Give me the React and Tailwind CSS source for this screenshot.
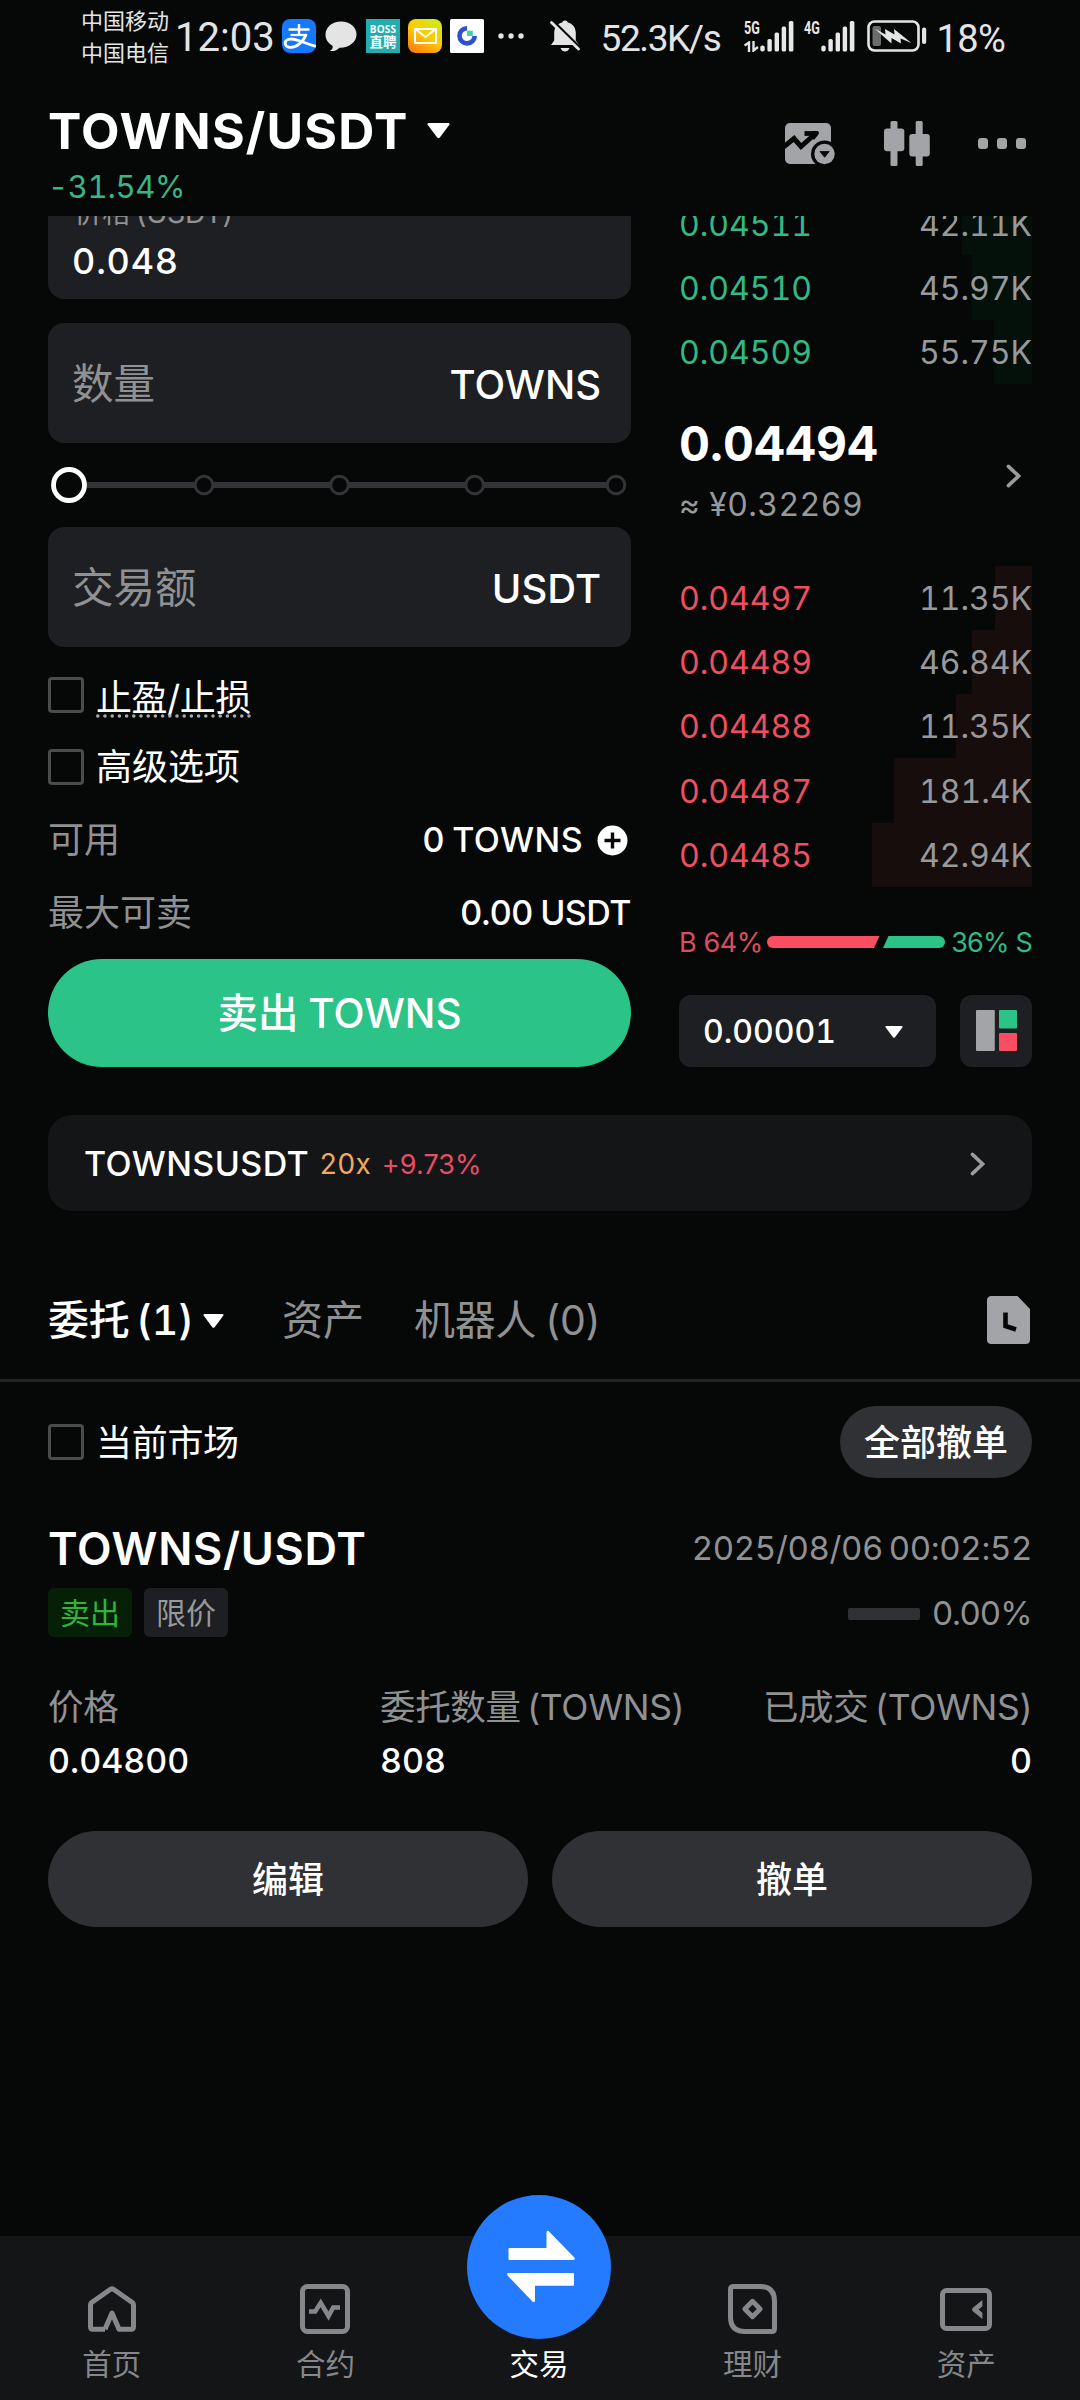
const FONT = "font-[Inter,'Noto_Sans_CJK_SC',sans-serif]";

function Caret({ className }) {
  return (
    <svg className={className} viewBox="0 0 23 15.5" fill="#fff">
      <path d="M1.8 0H21.2Q23.4 0.3 22.2 2L12.8 14.6Q11.5 16 10.2 14.6L0.8 2Q-0.4 0.3 1.8 0Z" />
    </svg>
  );
}

function Chevron() {
  return (
    <svg className="h-6 w-4" viewBox="0 0 16 24" fill="none" stroke="#9b9c9e" strokeWidth="3.6" strokeLinecap="round">
      <path d="M2.4 2.4L12.6 12L2.4 21.6" />
    </svg>
  );
}

function Checkbox() {
  return <span className="block h-9 w-9 shrink-0 rounded-[4px] border-[3px] border-[#4b4c4e]" />;
}

/* ---------- Status bar ---------- */

function SignalBars() {
  return (
    <svg className="h-[31px] w-[34px]" viewBox="0 0 34 31" fill="#e8e8e8">
      <rect x="0.3" y="24.5" width="4.4" height="6" rx="2" />
      <rect x="7.4" y="18" width="4.4" height="12.5" rx="1.6" />
      <rect x="14.6" y="11.5" width="4.4" height="19" rx="1.6" />
      <rect x="21.7" y="5.5" width="4.4" height="25" rx="1.6" />
      <rect x="28.8" y="0" width="4.6" height="30.5" rx="1.6" />
    </svg>
  );
}

function NetLabel({ children }) {
  return (
    <span className="block h-[14px] w-[17px] origin-left scale-x-[0.66] font-[Roboto,sans-serif] text-[19px] leading-[14px] font-bold whitespace-nowrap text-[#e8e8e8]">
      {children}
    </span>
  );
}

function StatusBar() {
  return (
    <div className="flex h-[72px] items-center pl-[81px] font-[Roboto,'Noto_Sans_CJK_SC',sans-serif] text-[#e4e4e4]">
      <div className="w-[90px] shrink-0 pt-[3px] text-[22px] leading-8 whitespace-nowrap">
        <div>中国移动</div>
        <div>中国电信</div>
      </div>
      <span className="ml-[4px] w-[100px] shrink-0 pt-1 text-[40px] leading-none whitespace-nowrap">12:03</span>
      <svg className="ml-[7px] h-[34px] w-[34px] shrink-0" viewBox="0 0 34 34">
        <rect width="34" height="34" rx="8" fill="#1677ff" />
        <g fill="none" stroke="#fff" strokeLinecap="butt">
          <path d="M6.500 10.500H27.500M17 5V16" strokeWidth="2.400" />
          <path d="M8.500 16H25" strokeWidth="2.200" />
          <path d="M24.200 15C22 22 15 28.500 8.500 28.300C2.500 28 1.500 22.500 6 20.500C12 18 20 23.500 34 27.500" strokeWidth="2.800" />
        </g>
      </svg>
      <svg className="ml-[9px] h-[31px] w-8 shrink-0" viewBox="0 0 32 31" fill="#e4e4e4">
        <path d="M16 0.500C7 0.500 0.500 6.300 0.500 13.500C0.500 18.500 3 22 7.500 24.800C8.300 27.500 6.500 29 4.800 30C9 30.500 12.500 29 14.500 26.700C24 27 31.500 21 31.500 13.500C31.500 6.300 25 0.500 16 0.500Z" />
      </svg>
      <div className="ml-[9px] flex h-[34px] w-[34px] shrink-0 flex-col items-center justify-center bg-[#23adb0] font-['Open_Sans','Noto_Sans_CJK_SC',sans-serif] font-bold text-white">
        <span className="text-[10px] leading-[12px] tracking-[0.2px]">BOSS</span>
        <span className="text-[13.500px] leading-[15px]">直聘</span>
      </div>
      <div className="ml-2 flex h-[34px] w-[34px] shrink-0 items-center justify-center rounded-lg bg-[linear-gradient(30deg,#ff7a0c_5%,#ffc800_50%,#c8f01a_98%)]">
        <svg className="h-4 w-[23px]" viewBox="0 0 23 16" fill="none" stroke="#fff" strokeWidth="2">
          <rect x="1" y="1" width="21" height="14" />
          <path d="M2 1.500L11.500 9L21 1.500" />
        </svg>
      </div>
      <svg className="ml-2 h-[34px] w-[34px] shrink-0" viewBox="0 0 34 34">
        <rect width="34" height="34" rx="1.500" fill="#fff" />
        <path d="M17 9.200A7.600 7.600 0 1 0 24.700 17" fill="none" stroke="#2d50cf" strokeWidth="4.600" />
        <rect x="17" y="11.700" width="5.800" height="5.300" fill="#35d3b4" />
      </svg>
      <svg className="ml-[13.500px] h-[6px] w-[26px] shrink-0" viewBox="0 0 26 6" fill="#e4e4e4">
        <circle cx="3" cy="3" r="2.700" />
        <circle cx="13" cy="3" r="2.700" />
        <circle cx="23" cy="3" r="2.700" />
      </svg>
      <svg className="ml-[26px] h-8 w-[31px] shrink-0" viewBox="0 0 31 32">
        <path d="M15 0.500C16.500 0.500 17.500 1.300 17.800 2.500C23 3.800 25.800 8 25.800 13V20.500L29 25H1L4.200 20.500V13C4.200 8 7 3.800 12.200 2.500C12.500 1.300 13.500 0.500 15 0.500Z" fill="#e4e4e4" />
        <path d="M10.500 28H19.500Q18 31.500 15 31.500T10.500 28Z" fill="#e4e4e4" />
        <path d="M0 -1.500L32 30" stroke="#060807" strokeWidth="3.400" />
        <path d="M1.500 2.500L28.500 29" stroke="#e4e4e4" strokeWidth="2.800" strokeLinecap="round" />
      </svg>
      <span className="ml-[20px] w-[120px] shrink-0 pt-[5px] text-[37px] leading-none tracking-[-1.400px] whitespace-nowrap">52.3K/s</span>
      <div className="ml-[23px] flex w-[16px] shrink-0 flex-col gap-[6px]">
        <NetLabel>5G</NetLabel>
        <svg className="h-[11px] w-[15px]" viewBox="0 0 15 11" fill="none" stroke="#e4e4e4" strokeWidth="2.400">
          <path d="M0.500 4.500L5 1.500V11M9.500 0V9.500L14 6" />
        </svg>
      </div>
      <SignalBars />
      <div className="ml-[10px] flex w-[17px] shrink-0 flex-col gap-[6px]">
        <NetLabel>4G</NetLabel>
        <span className="h-[11px]" />
      </div>
      <SignalBars />
      <svg className="ml-[12px] h-8 w-[60px] shrink-0" viewBox="0 0 60 32">
        <rect x="1.500" y="1.500" width="50" height="29" rx="6" fill="none" stroke="#e4e4e4" strokeWidth="2.600" />
        <rect x="5.500" y="6" width="8.500" height="20" rx="2" fill="#6a6b6b" />
        <path d="M7.500 8.500L18.500 14.500L18 9L27.500 14.500L27 9L44.500 23L33.500 18.500L34 23.500L24.500 18L24.500 23.500Z" fill="#e4e4e4" />
        <rect x="55" y="7.500" width="4.200" height="16.500" rx="2" fill="#e4e4e4" />
      </svg>
      <span className="ml-[10px] shrink-0 pt-[5px] text-[38px] leading-none tracking-[-0.600px] whitespace-nowrap">18%</span>
    </div>
  );
}

/* ---------- Header ---------- */

function Header() {
  return (
    <header className="flex h-36 items-start justify-between pr-[54px] pl-12">
      <div className="pt-[29px]">
        <div className="flex items-center">
          <h1 className="text-[50px] leading-[60px] font-bold tracking-[1.200px] text-white">TOWNS/USDT</h1>
          <Caret className="ml-[19px] h-[15.500px] w-[23px]" />
        </div>
        <div className="mt-[6px] text-[31px] leading-10 tracking-[-0.300px] text-[#35b787] tabular-nums">-31.54%</div>
      </div>
      <div className="flex items-center gap-[48px] pt-[49px]">
        <svg className="h-[42px] w-[51px]" viewBox="0 0 51 42">
          <rect y="0" width="46" height="41" rx="5" fill="#a2a4a8" />
          <g fill="none" stroke="#060807" strokeWidth="5">
            <path d="M-2 24.500L9 15.500L16 23.500L29.500 11.500" />
            <path d="M19.500 10.500H31.500" strokeWidth="4.800" />
          </g>
          <path d="M27 8.100H32.500Q34.500 9 33.500 11.500L29 17L25 12Z" fill="#060807" />
          <circle cx="39.500" cy="31" r="13.500" fill="#060807" />
          <circle cx="39.500" cy="31" r="10.200" fill="#a2a4a8" />
          <path d="M35 28.500H44.200L39.600 34.300Z" fill="#060807" stroke="#060807" strokeWidth="0.800" strokeLinejoin="round" />
        </svg>
        <svg className="h-[45px] w-[46px]" viewBox="0 0 46 45" fill="#a2a4a8">
          <rect x="6.500" width="7" height="45" rx="1.500" />
          <rect y="7.500" width="20.300" height="22.800" rx="3" />
          <rect x="31.700" width="7" height="45" rx="1.500" />
          <rect x="25.300" y="13" width="20.500" height="22.500" rx="3" />
        </svg>
        <div className="flex gap-[8.500px]">
          <i className="h-[10.500px] w-[10.500px] rounded-[3px] bg-[#a2a4a8]" />
          <i className="h-[10.500px] w-[10.500px] rounded-[3px] bg-[#a2a4a8]" />
          <i className="h-[10.500px] w-[10.500px] rounded-[3px] bg-[#a2a4a8]" />
        </div>
      </div>
    </header>
  );
}

/* ---------- Order form ---------- */

function AmountField({ label, unit }) {
  return (
    <div className="flex h-[120px] items-center justify-between rounded-2xl bg-[#1e1f22] pt-[3px] pr-[30px] pl-6">
      <span className="text-[41.500px] leading-none text-[#909193]">{label}</span>
      <span className="text-[40px] leading-none font-medium text-white">{unit}</span>
    </div>
  );
}

function AmountSlider() {
  return (
    <svg className="block h-[84px] w-[583px]" viewBox="0 0 583 84" fill="#060807">
      <path d="M21 42H568" stroke="#333437" strokeWidth="6" />
      <g stroke="#333437" strokeWidth="3">
        <circle cx="156" cy="42" r="8.800" />
        <circle cx="291.500" cy="42" r="8.800" />
        <circle cx="426.700" cy="42" r="8.800" />
        <circle cx="568" cy="42" r="8.800" />
      </g>
      <circle cx="21" cy="42" r="15.500" stroke="#fff" strokeWidth="4.800" />
    </svg>
  );
}

function OrderForm() {
  return (
    <div className="w-[583px]">
      <div className="flex h-[83px] flex-col justify-end overflow-hidden">
        <div className="h-[120px] shrink-0 rounded-2xl bg-[#1e1f22] px-6 pt-[17px]">
          <div className="pl-[2px] text-[28.500px] leading-[34px] tracking-[-0.300px] [word-spacing:-2px] text-[#909193]">价格 (USDT)</div>
          <div className="mt-[9px] text-[36px] leading-[44px] font-medium tracking-[0.800px] text-white tabular-nums">0.048</div>
        </div>
      </div>
      <div className="mt-6">
        <AmountField label="数量" unit="TOWNS" />
      </div>
      <AmountSlider />
      <AmountField label="交易额" unit="USDT" />
      <div className="mt-[30px] flex h-9 items-center gap-3 text-[36px] text-white">
        <Checkbox />
        <span className="flex flex-col pt-1">
          <span className="h-9 leading-9 tracking-[-0.400px]">止盈/止损</span>
          <svg className="-mt-[2px] -mb-1 h-1 w-[155px]" viewBox="0 0 155 4">
            <path d="M1.800 2H154" stroke="#a8a9ab" strokeWidth="3.600" strokeLinecap="round" strokeDasharray="0 7.200" />
          </svg>
        </span>
      </div>
      <div className="mt-9 flex h-9 items-center gap-3 text-[36px] text-white">
        <Checkbox />
        <span className="leading-9">高级选项</span>
      </div>
      <div className="mt-[33px] flex h-[44px] items-center justify-between pr-[3px]">
        <span className="text-[36px] leading-none text-[#909193]">可用</span>
        <span className="flex items-center gap-[14px] text-[34px] leading-none font-medium tracking-[0.400px] [word-spacing:-2px] text-white">
          0 TOWNS
          <svg className="h-[31px] w-[31px]" viewBox="0 0 31 31">
            <circle cx="15.500" cy="15.500" r="15" fill="#fff" />
            <path d="M15.500 7.500V23.500M7.500 15.500H23.500" stroke="#060807" strokeWidth="3.400" />
          </svg>
        </span>
      </div>
      <div className="mt-7 flex h-[44px] items-center justify-between pt-px">
        <span className="text-[36px] leading-none text-[#909193]">最大可卖</span>
        <span className="text-[34px] leading-none font-medium tracking-[-0.500px] [word-spacing:-1px] text-white">0.00 USDT</span>
      </div>
      <button className="mt-[25px] flex h-[108px] w-full items-center justify-center rounded-full bg-[#2bc388] pt-[2px] text-[40.500px] leading-none font-medium [word-spacing:-1px] text-white">
        卖出 TOWNS
      </button>
    </div>
  );
}

/* ---------- Order book ---------- */

const upper = [
  { price: "0.04511", size: "42.11K", depth: 70 },
  { price: "0.04510", size: "45.97K", depth: 60 },
  { price: "0.04509", size: "55.75K", depth: 38 },
];
const lower = [
  { price: "0.04497", size: "11.35K", depth: 37 },
  { price: "0.04489", size: "46.84K", depth: 60 },
  { price: "0.04488", size: "11.35K", depth: 76 },
  { price: "0.04487", size: "181.4K", depth: 138 },
  { price: "0.04485", size: "42.94K", depth: 160 },
];

function BookRow({ row, priceClass, depthClass }) {
  return (
    <div className="relative flex h-[64.300px] shrink-0 items-center justify-between pt-[2.500px] text-[32px] leading-none tabular-nums">
      <span className={"absolute inset-y-0 right-0 " + depthClass} style={{ width: row.depth }} />
      <span className={"relative " + priceClass}>{row.price}</span>
      <span className="relative text-[#98999b]">{row.size}</span>
    </div>
  );
}

function OrderBook() {
  return (
    <div className="w-[353px]">
      <div className="flex h-[168px] flex-col justify-end overflow-hidden">
        {upper.map((r) => (
          <BookRow key={r.price} row={r} priceClass="text-[#32b985]" depthClass="bg-[#04100a]" />
        ))}
      </div>
      <div className="flex h-[181.500px] items-start justify-between pt-[30px] pr-[10px]">
        <div>
          <div className="text-[48px] leading-[60px] font-bold text-white tabular-nums">0.04494</div>
          <div className="mt-[11px] text-[32px] leading-10 tracking-[0.400px] text-[#98999b] tabular-nums">≈ ¥0.32269</div>
        </div>
        <div className="mt-[50px]">
          <Chevron />
        </div>
      </div>
      <div>
        {lower.map((r) => (
          <BookRow key={r.price} row={r} priceClass="text-[#ee4f62]" depthClass="bg-[#170d0d]" />
        ))}
      </div>
      <div className="mt-10 flex h-[30px] items-center justify-between text-[27px] leading-none">
        <span className="w-[88px] pt-px tracking-[-0.400px] whitespace-nowrap text-[#dd4d60]">B 64%</span>
        <svg className="h-3 w-[178px] shrink-0" viewBox="0 0 178 12">
          <path d="M6 0H112.500L107 12H6A6 6 0 0 1 6 0Z" fill="#f94e62" />
          <path d="M121.500 0H172A6 6 0 0 1 172 12H116Z" fill="#2bc388" />
        </svg>
        <span className="flex w-[87px] justify-end pt-px tracking-[-0.800px] whitespace-nowrap text-[#32b985]">36% S</span>
      </div>
      <div className="mt-[38px] flex gap-6">
        <div className="flex h-[72px] w-[257px] items-center justify-between rounded-xl bg-[#1e1f22] pt-[2px] pr-[33px] pl-6">
          <span className="text-[32px] leading-none font-medium text-white tabular-nums">0.00001</span>
          <Caret className="h-[12px] w-[18px]" />
        </div>
        <div className="flex h-[72px] w-[72px] items-center justify-center rounded-xl bg-[#1e1f22]">
          <svg className="h-[41px] w-[41px]" viewBox="0 0 41 41">
            <rect width="18.800" height="41" rx="1" fill="#a2a4a8" />
            <rect x="23" width="18" height="18.500" rx="1" fill="#2bc388" />
            <rect x="23" y="23" width="18" height="18" rx="1" fill="#f94e62" />
          </svg>
        </div>
      </div>
    </div>
  );
}

/* ---------- Open orders ---------- */

function Tabs() {
  return (
    <div className="flex h-[171px] items-start justify-between border-b-[3px] border-[#222324] pt-[79px] pr-[50px] pl-12 text-[41px] leading-[61px]">
      <div className="flex">
        <span className="flex w-[234px] items-center font-medium tracking-[-0.300px] [word-spacing:-4px] text-white tabular-nums">
          委托 (1)
          <Caret className="ml-[9px] h-[14px] w-[21px]" />
        </span>
        <span className="w-[132px] text-[#909193]">资产</span>
        <span className="tracking-[-0.300px] [word-spacing:-2px] text-[#909193]">机器人 (0)</span>
      </div>
      <svg className="mt-[6px] h-12 w-[43px]" viewBox="0 0 43 48">
        <path d="M4.500 0H30.500L43 13V43.500Q43 48 38.500 48H4.500Q0 48 0 43.500V4.500Q0 0 4.500 0Z" fill="#a2a4a8" />
        <path d="M18.500 16.500V30L29 33.500" fill="none" stroke="#060807" strokeWidth="4.600" />
      </svg>
    </div>
  );
}

function Field({ label, value, className }) {
  return (
    <div className={className}>
      <div className="text-[35.500px] leading-[44px] tracking-[-0.350px] [word-spacing:-3px] whitespace-nowrap text-[#909193]">{label}</div>
      <div className="mt-[9px] text-[34px] leading-[44px] font-medium text-white tabular-nums">{value}</div>
    </div>
  );
}

function OpenOrders() {
  return (
    <section className="px-12 pt-6">
      <div className="flex h-[72px] items-center justify-between text-[36px] leading-none text-white">
        <span className="flex items-center gap-3">
          <Checkbox />
          <span className="pt-[2px] tracking-[-0.300px]">当前市场</span>
        </span>
        <button className="flex h-[72px] w-48 items-center justify-center rounded-full bg-[#303134] pt-[2px] font-medium">全部撤单</button>
      </div>
      <div className="mt-10 flex h-[60px] items-center justify-between">
        <h2 className="text-[45px] leading-none font-semibold tracking-[0.700px] text-white">TOWNS/USDT</h2>
        <span className="text-[33px] leading-none tracking-[-0.350px] [word-spacing:-3px] text-[#909193] tabular-nums">2025/08/06 00:02:52</span>
      </div>
      <div className="mt-[10px] flex h-[49px] items-center justify-between">
        <div className="flex gap-3 text-[30px] leading-none">
          <span className="flex h-[49px] w-[84px] items-center justify-center rounded-md bg-[#062008] text-[#2fb53b]">卖出</span>
          <span className="flex h-[49px] w-[84px] items-center justify-center rounded-md bg-[#1e1f22] text-[#98999b]">限价</span>
        </div>
        <div className="flex items-center gap-3 pt-[2px] text-[33px] leading-none tracking-[-0.600px] text-[#909193]">
          <span className="h-3 w-[72px] rounded-[2px] bg-[#303134]" />
          0.00%
        </div>
      </div>
      <div className="mt-[49px] flex justify-between">
        <Field className="w-[332px]" label="价格" value="0.04800" />
        <Field className="flex-1" label="委托数量 (TOWNS)" value="808" />
        <Field className="text-right" label="已成交 (TOWNS)" value="0" />
      </div>
      <div className="mt-12 grid grid-cols-2 gap-6 text-[36px] leading-none font-medium text-white">
        <button className="h-24 rounded-full bg-[#303134] pt-[2px]">编辑</button>
        <button className="h-24 rounded-full bg-[#303134] pt-[2px]">撤单</button>
      </div>
    </section>
  );
}

/* ---------- Bottom navigation ---------- */

function NavItem({ label, active, children }) {
  return (
    <div className="flex flex-1 flex-col items-center pt-[47px]">
      <div className="flex h-[52px] items-center justify-center">{children}</div>
      <span className={"mt-[11px] text-[29.500px] leading-9 " + (active ? "text-white" : "text-[#85878a]")}>{label}</span>
    </div>
  );
}

function BottomNav() {
  return (
    <nav className="relative flex h-[164px] bg-[#141517] pr-[7px] pl-[5px]">
      <NavItem label="首页">
        <svg className="h-[46px] w-[48px]" viewBox="0 0 48 46" fill="none" stroke="#85878a" strokeWidth="5" strokeLinejoin="round">
          <path d="M17 43.200H5Q2.500 43.200 2.500 40.700V19Q2.500 17.500 3.700 16.500L22.500 3.300Q24 2.300 25.500 3.300L44.300 16.500Q45.500 17.500 45.500 19V40.700Q45.500 43.200 43 43.200H31L24 27L17 43.200" />
        </svg>
      </NavItem>
      <NavItem label="合约">
        <svg className="h-[50px] w-[50px]" viewBox="0 0 50 50" fill="none" stroke="#85878a" strokeWidth="5">
          <rect x="2.500" y="2.500" width="45" height="45" rx="5" />
          <path d="M9 27.500H15.200L20.700 18.800L28.500 32L33.200 23.500H40" strokeWidth="4.600" />
        </svg>
      </NavItem>
      <NavItem label="交易" active>
        <span className="absolute -top-[41px] flex h-36 w-36 items-center justify-center rounded-full bg-[#247bff]">
          <svg className="mt-[-2px] ml-1 h-[73px] w-[68px]" viewBox="0 0 68 73" fill="#fff">
            <path d="M2.500 18H39.500V2.500Q39.800 0 41.800 1.300L67.300 27.500Q68.500 30 66.500 30H2.500Q1.500 30 1.500 29V19Q1.500 18 2.500 18Z" />
            <path d="M1.500 43H66Q67 43 67 44V54.700Q67 55.700 66 55.700H28V70.500Q27.700 73 25.700 71.700L0.500 45.500Q-0.700 43 1.500 43Z" />
          </svg>
        </span>
      </NavItem>
      <NavItem label="理财">
        <svg className="h-[50px] w-[49px]" viewBox="0 0 49 50" fill="none" stroke="#85878a" strokeWidth="5">
          <path d="M5.500 2.500H32Q46.500 2.500 46.500 17V44.500Q46.500 47.500 43.500 47.500H17Q2.500 47.500 2.500 33V5.500Q2.500 2.500 5.500 2.500Z" />
          <path d="M24.500 17.200L32.200 25L24.500 32.800L16.800 25Z" strokeWidth="4.800" strokeLinejoin="round" />
        </svg>
      </NavItem>
      <NavItem label="资产">
        <svg className="h-[43px] w-[52px]" viewBox="0 0 52 43" fill="#85878a">
          <rect x="2.500" y="2.500" width="47" height="38" rx="4" fill="none" stroke="#85878a" strokeWidth="5" />
          <path d="M42.400 12V18.300L38.500 21.500L42.400 24.700V31L32.800 23.200Q31 21.500 32.800 19.800Z" />
        </svg>
      </NavItem>
    </nav>
  );
}

export default function App() {
  return (
    <div className={"flex h-[2400px] w-[1080px] flex-col overflow-hidden bg-[#060807] " + FONT}>
      <StatusBar />
      <Header />
      <main className="flex flex-1 flex-col">
        <div className="flex gap-12 pl-12">
          <OrderForm />
          <OrderBook />
        </div>
        <div className="mx-12 mt-12 flex h-24 items-center rounded-3xl bg-[#141517] pt-[2px] pr-[46px] pl-9 leading-none">
          <span className="text-[34px] font-medium tracking-[0.400px] text-white">TOWNSUSDT</span>
          <span className="ml-[10px] text-[28px] text-[#f0a860] tabular-nums">20x</span>
          <span className="ml-[11px] flex-1 text-[27px] tracking-[0.100px] text-[#e84d66]">+9.73%</span>
          <Chevron />
        </div>
        <Tabs />
        <OpenOrders />
      </main>
      <BottomNav />
    </div>
  );
}
